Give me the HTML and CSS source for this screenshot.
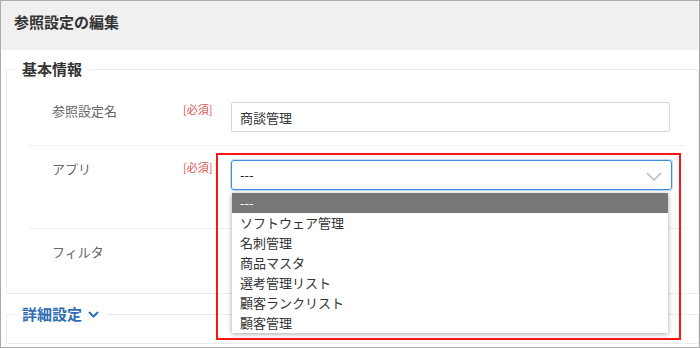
FILE: index.html
```html
<!DOCTYPE html>
<html>
<head>
    <meta charset="utf-8">
    <link rel="stylesheet" href="styles.css">
</head>
<body>
    <div class="dialog">
        <div class="dialog-header">
            <div class="dialog-title">参照設定の編集</div>
        </div>

        <fieldset class="group">
            <legend class="group-title">基本情報</legend>
            <div class="rows">
                <div class="row">
                    <div class="row-label">参照設定名</div>
                    <div class="required">[必須]</div>
                    <div class="row-field">
                        <input type="text" class="text-input" value="商談管理">
                    </div>
                </div>

                <div class="row row-app">
                    <div class="row-label">アプリ</div>
                    <div class="required">[必須]</div>
                    <div class="row-field select-wrap">
                        <div class="select-box">---</div>
                        <svg class="select-arrow" width="16" height="9" viewBox="0 0 16 9">
                            <polyline points="1,1 8,8 15,1" fill="none" stroke="#bcbcbc" stroke-width="1.6"/>
                        </svg>
                        <ul class="option-list">
                            <li class="option selected">---</li>
                            <li class="option">ソフトウェア管理</li>
                            <li class="option">名刺管理</li>
                            <li class="option">商品マスタ</li>
                            <li class="option">選考管理リスト</li>
                            <li class="option">顧客ランクリスト</li>
                            <li class="option">顧客管理</li>
                        </ul>
                    </div>
                </div>

                <div class="row row-filter">
                    <div class="row-label">フィルタ</div>
                </div>
            </div>
        </fieldset>

        <fieldset class="group group-advanced">
            <legend class="group-title toggle-title">詳細設定
                <svg class="toggle-arrow" width="11" height="7" viewBox="0 0 11 7">
                    <polyline points="1,1 5.5,5.5 10,1" fill="none" stroke="#2f6db5" stroke-width="2"/>
                </svg>
            </legend>
            <div class="advanced-body"></div>
        </fieldset>

        <div class="highlight"></div>
    </div>
</body>
</html>
```

FILE: styles.css
```css
body {
    margin: 0;
    font-family: "Noto Sans CJK JP", "Noto Sans", sans-serif;
    color: #333;
    background: #fff;
}

.dialog {
    position: relative;
    width: 700px;
    height: 348px;
    box-sizing: border-box;
    border: 1px solid #ababab;
    overflow: hidden;
}

.dialog-header {
    height: 49px;
    box-sizing: border-box;
    padding: 11px 13px 0;
    background: #f0f0f0;
}

.dialog-title {
    font-size: 15px;
    font-weight: bold;
    line-height: 20px;
    color: #333;
}

.group {
    margin: 9px 0 0 5px;
    padding: 0;
    border: 1px solid #ececec;
    min-width: 0;
}

.group-title {
    margin-left: 7px;
    padding: 0 8px;
    font-size: 15px;
    font-weight: bold;
    line-height: 20px;
    color: #333;
}

.rows {
    margin-left: 22px;
    margin-right: 13px;
    padding-top: 9px;
}

.row {
    display: flex;
    align-items: flex-start;
    padding: 14px 15px 13px 23px;
    border-bottom: 1px solid #efefef;
}

.row-app {
    padding-bottom: 38px;
}

.row-filter {
    border-bottom: none;
    padding-bottom: 32px;
}

.row-label {
    width: 131px;
    font-size: 13px;
    line-height: 18px;
    color: #666;
}

.required {
    width: 32px;
    margin-right: 16px;
    font-size: 11px;
    line-height: 14px;
    color: #d9534f;
}

.row-field {
    flex: 1;
}

.text-input {
    display: block;
    width: 100%;
    height: 30px;
    box-sizing: border-box;
    padding: 0 8px;
    border: 1px solid #d6d6d6;
    border-radius: 2px;
    font-family: inherit;
    font-size: 13px;
    color: #333;
}

.select-wrap {
    position: relative;
    margin-right: -2px;
}

.select-box {
    height: 30px;
    box-sizing: border-box;
    padding: 0 8px;
    border: 1px solid #3d8fdc;
    border-radius: 3px;
    box-shadow: 0 0 0 1px rgba(61, 143, 220, 0.3);
    font-size: 13px;
    line-height: 28px;
    color: #222;
}

.select-arrow {
    position: absolute;
    right: 10px;
    top: 12px;
}

.option-list {
    position: absolute;
    left: 1px;
    top: 33px;
    width: 436px;
    margin: 0;
    padding: 0;
    list-style: none;
    background: #fff;
    box-shadow: 0 1px 5px rgba(0, 0, 0, 0.35);
    z-index: 2;
}

.option {
    height: 20px;
    padding-left: 8px;
    font-size: 13px;
    line-height: 20px;
    color: #333;
}

.option.selected {
    background: #777;
    color: #fff;
}

.group-advanced {
    margin-top: 10px;
}

.toggle-title {
    color: #2f6db5;
}

.toggle-arrow {
    margin-left: 3px;
    vertical-align: 2px;
}

.advanced-body {
    height: 19px;
}

.highlight {
    position: absolute;
    left: 215px;
    top: 152px;
    width: 461px;
    height: 183px;
    border: 2px solid #ff1414;
    z-index: 3;
}
```
